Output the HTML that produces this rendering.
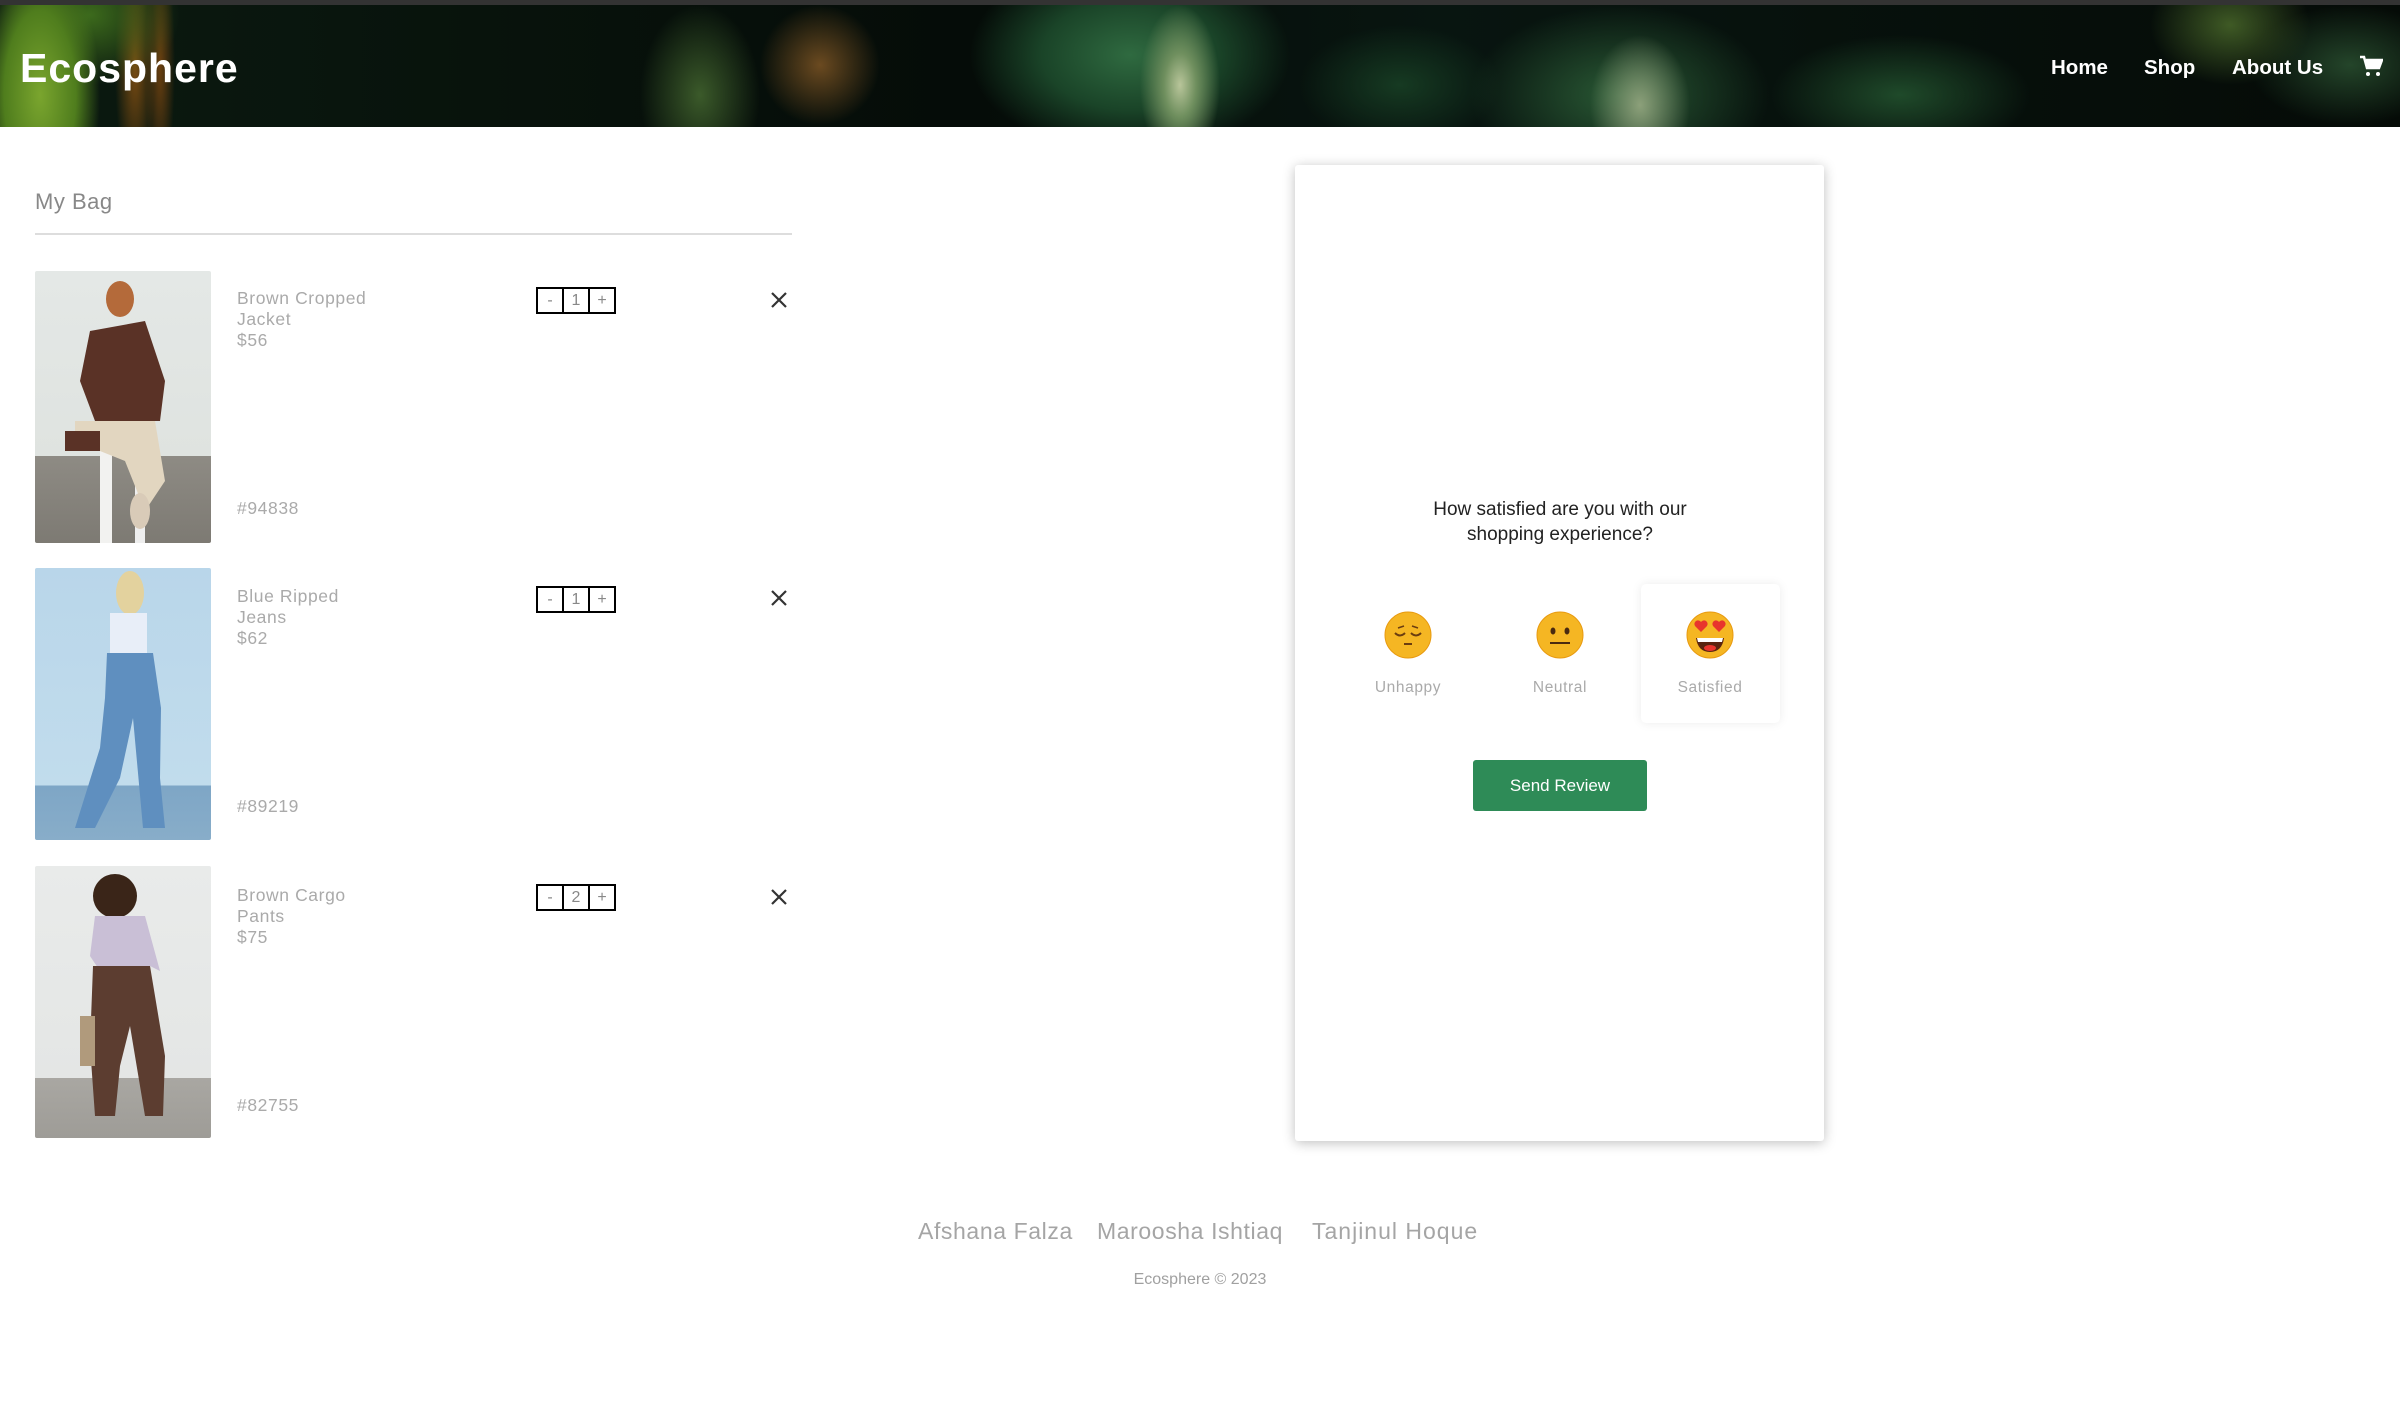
<!DOCTYPE html>
<html><head><meta charset="utf-8"><style>
*{margin:0;padding:0;box-sizing:border-box}
body{width:2400px;height:1419px;background:#fff;position:relative;overflow:hidden;font-family:"Liberation Sans",sans-serif}
.top{position:absolute;left:0;top:0;width:2400px;height:5px;background:#333}
header{position:absolute;left:0;top:5px;width:2400px;height:122px;overflow:hidden;
background:
radial-gradient(ellipse 60px 140px at 40px 90px,#7aa52e 0,#4f7d1d 60%,transparent 100%),
radial-gradient(ellipse 90px 70px at 90px 10px,#3c6a1c 0,transparent 100%),
radial-gradient(ellipse 20px 120px at 135px 60px,#7a4b12 0,transparent 100%),
radial-gradient(ellipse 15px 120px at 160px 60px,#6b4010 0,transparent 100%),
radial-gradient(ellipse 40px 80px at 1180px 80px,#b8c59a 0,#6f8f5e 40%,transparent 100%),
radial-gradient(ellipse 160px 100px at 1130px 50px,#2f6a40 0,#1a4428 55%,transparent 100%),
radial-gradient(ellipse 50px 70px at 1640px 100px,#8ca07a 0,transparent 100%),
radial-gradient(ellipse 150px 90px at 1620px 90px,#2a5a35 0,transparent 100%),
radial-gradient(ellipse 60px 60px at 820px 60px,#6b4a20 0,transparent 100%),
radial-gradient(ellipse 60px 90px at 700px 90px,#3b5a2a 0,transparent 100%),
radial-gradient(ellipse 100px 60px at 1400px 80px,#163a22 0,transparent 100%),
radial-gradient(ellipse 80px 60px at 2230px 20px,#3f5a25 0,transparent 100%),
radial-gradient(ellipse 100px 60px at 2350px 60px,#24452a 0,transparent 100%),
radial-gradient(ellipse 130px 60px at 1900px 90px,#1f4a2a 0,transparent 100%),
linear-gradient(90deg,#0b1a10,#050c08 40%,#081510 60%,#050b07);}
.logo{position:absolute;left:20px;top:40px;color:#fff;font-weight:bold;font-size:41px;letter-spacing:1px}
.nav{position:absolute;top:51px;color:#fff;font-weight:bold;font-size:20.5px}
.mybag{position:absolute;left:35px;top:189px;font-size:22px;color:#888;letter-spacing:.5px}
.hr{position:absolute;left:35px;top:233px;width:757px;height:2px;background:#ddd}
.img{position:absolute;left:35px;width:176px;height:272px;border-radius:2px;overflow:hidden}
.nm{position:absolute;left:237px;font-size:17.5px;line-height:21px;color:#aaa;letter-spacing:.6px}
.sku{position:absolute;left:237px;font-size:17.5px;color:#aaa;letter-spacing:.6px}
.qty{position:absolute;left:536px;width:80px;height:27px;border:2px solid #000;display:flex}
.qty div{flex:1;border-right:2px solid #000;text-align:center;font-size:16px;line-height:23px;color:#888}
.qty div:last-child{border-right:none}
.x{position:absolute;left:769px;width:20px;height:20px}
.card{position:absolute;left:1295px;top:165px;width:529px;height:976px;background:#fff;box-shadow:0 2px 12px rgba(0,0,0,.25);border-radius:3px}
.q{position:absolute;left:1360px;width:400px;top:497px;text-align:center;font-size:19px;line-height:25px;color:#222}
.sel{position:absolute;left:1641px;top:584px;width:139px;height:139px;background:#fff;border-radius:5px;box-shadow:0 0 10px rgba(0,0,0,.08)}
.em{position:absolute;top:611px;width:48px;height:48px}
.lb{position:absolute;top:679px;width:140px;text-align:center;font-size:15.5px;color:#aaa;letter-spacing:.6px}
.btn{position:absolute;left:1473px;top:760px;width:174px;height:51px;background:#2e8b57;border-radius:3px;color:#fff;font-size:17px;text-align:center;line-height:51px}
.names{position:absolute;top:1218px;font-size:23px;color:#a5a5a5;letter-spacing:.6px}
.copy{position:absolute;left:0;width:2400px;top:1271px;text-align:center;font-size:16px;color:#a0a0a0}
</style></head><body>
<div class="top"></div>
<header>
<div class="logo">Ecosphere</div>
<div class="nav" style="left:2051px">Home</div>
<div class="nav" style="left:2144px">Shop</div>
<div class="nav" style="left:2232px">About Us</div>
<svg style="position:absolute;left:2359px;top:49px" width="24" height="24" viewBox="0 0 24 24"><path d="M1 3h4l3 11h12l3-8H7" fill="none" stroke="#fff" stroke-width="2.5"/><path d="M7 6h16l-3 8H8z" fill="#fff"/><circle cx="9" cy="20" r="2" fill="#fff"/><circle cx="19" cy="20" r="2" fill="#fff"/></svg>
</header>

<div class="mybag">My Bag</div>
<div class="hr"></div>

<div class="img" style="top:271px;background:linear-gradient(180deg,#e4e8e6 0,#dfe3e0 68%,#8e8b84 68%,#7d7a73 100%)">
<svg width="176" height="272" viewBox="0 0 176 272"><rect x="65" y="160" width="12" height="112" fill="#f2f2f0"/><rect x="100" y="160" width="10" height="112" fill="#eee"/><ellipse cx="85" cy="28" rx="14" ry="18" fill="#b46a3a"/><path d="M55 60 L110 50 L130 110 L125 150 L60 150 L45 110z" fill="#5a3226"/><path d="M40 150 L120 150 L130 210 L110 240 L90 190 L40 170z" fill="#e2d6c0"/><rect x="30" y="160" width="35" height="20" fill="#5a3226"/><ellipse cx="105" cy="240" rx="10" ry="18" fill="#d9cbb8"/></svg></div>
<div class="nm" style="top:288px">Brown Cropped<br>Jacket<br>$56</div>
<div class="sku" style="top:498px">#94838</div>
<div class="qty" style="top:287px"><div>-</div><div>1</div><div>+</div></div>
<svg class="x" style="top:290px" viewBox="0 0 20 20"><path d="M3 3L17 17M17 3L3 17" stroke="#333" stroke-width="2.2"/></svg>

<div class="img" style="top:568px;background:linear-gradient(180deg,#b9d6ea 0,#c1dcec 80%,#7ea6c6 80%,#88adc9 100%)">
<svg width="176" height="272" viewBox="0 0 176 272"><ellipse cx="95" cy="25" rx="14" ry="22" fill="#e3d29e"/><path d="M75 45 L112 45 L112 85 L75 85z" fill="#e8eef8"/><path d="M72 85 L118 85 L126 140 L125 210 L130 260 L108 260 L98 150 L85 210 L60 260 L40 260 L65 180 L70 130z" fill="#5f8fbf"/></svg></div>
<div class="nm" style="top:586px">Blue Ripped<br>Jeans<br>$62</div>
<div class="sku" style="top:796px">#89219</div>
<div class="qty" style="top:586px"><div>-</div><div>1</div><div>+</div></div>
<svg class="x" style="top:588px" viewBox="0 0 20 20"><path d="M3 3L17 17M17 3L3 17" stroke="#333" stroke-width="2.2"/></svg>

<div class="img" style="top:866px;background:linear-gradient(180deg,#e9ebea 0,#e4e6e5 78%,#a9a7a2 78%,#9e9c97 100%)">
<svg width="176" height="272" viewBox="0 0 176 272"><ellipse cx="80" cy="30" rx="22" ry="22" fill="#3a2518"/><path d="M60 50 L110 50 L125 105 L115 100 L65 105 L55 90z" fill="#c9bfd6"/><path d="M58 100 L115 100 L130 190 L128 250 L110 250 L95 160 L85 200 L80 250 L60 250 L55 180z" fill="#5c3d30"/><rect x="45" y="150" width="15" height="50" fill="#b09a7c"/></svg></div>
<div class="nm" style="top:885px">Brown Cargo<br>Pants<br>$75</div>
<div class="sku" style="top:1095px">#82755</div>
<div class="qty" style="top:884px"><div>-</div><div>2</div><div>+</div></div>
<svg class="x" style="top:887px" viewBox="0 0 20 20"><path d="M3 3L17 17M17 3L3 17" stroke="#333" stroke-width="2.2"/></svg>

<div class="card"></div>
<div class="q">How satisfied are you with our<br>shopping experience?</div>
<div class="sel"></div>
<svg class="em" style="left:1384px" viewBox="0 0 48 48"><circle cx="24" cy="24" r="23" fill="#f5b623" stroke="#e89a10"/><path d="M11 22q5 5 10 0M27 22q5 5 10 0" stroke="#6b3d10" stroke-width="2" fill="none"/><path d="M14 17l6-2M34 17l-6-2" stroke="#6b3d10" stroke-width="1.5"/><path d="M20 33h8" stroke="#6b3d10" stroke-width="2"/></svg>
<svg class="em" style="left:1536px" viewBox="0 0 48 48"><circle cx="24" cy="24" r="23" fill="#f5b623" stroke="#e89a10"/><ellipse cx="17" cy="20" rx="2.5" ry="3.5" fill="#4a2a10"/><ellipse cx="31" cy="20" rx="2.5" ry="3.5" fill="#4a2a10"/><path d="M14 32h20" stroke="#4a2a10" stroke-width="2"/></svg>
<svg class="em" style="left:1686px" viewBox="0 0 48 48"><circle cx="24" cy="24" r="23" fill="#f5b623" stroke="#e89a10"/><path d="M15 21l-6-6a3.5 3.5 0 016-4 3.5 3.5 0 016 4z" fill="#e8352d"/><path d="M33 21l-6-6a3.5 3.5 0 016-4 3.5 3.5 0 016 4z" fill="#e8352d"/><path d="M10 27h28q-2 14-14 14t-14-14z" fill="#5a2410"/><path d="M11 27h26l-1 4H12z" fill="#fff"/><ellipse cx="24" cy="37" rx="6" ry="3" fill="#e8352d"/></svg>
<div class="lb" style="left:1338px">Unhappy</div>
<div class="lb" style="left:1490px">Neutral</div>
<div class="lb" style="left:1640px">Satisfied</div>
<div class="btn">Send Review</div>

<div class="names" style="left:918px">Afshana Falza</div>
<div class="names" style="left:1097px">Maroosha Ishtiaq</div>
<div class="names" style="left:1312px;letter-spacing:1px">Tanjinul Hoque</div>
<div class="copy">Ecosphere © 2023</div>
</body></html>
